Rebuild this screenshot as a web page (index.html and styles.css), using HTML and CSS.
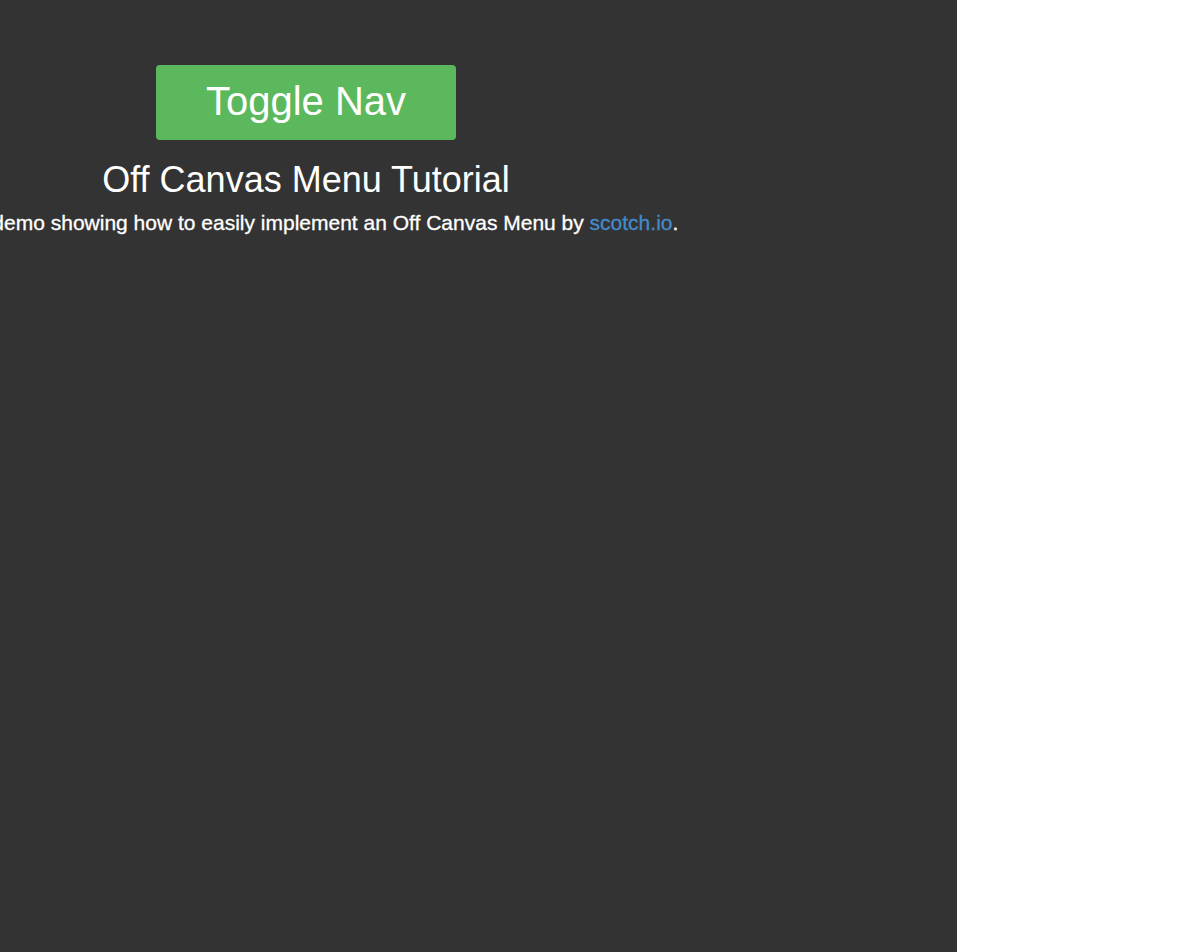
FILE: index.html
```html
<!DOCTYPE html>
<html>
<head>
<meta charset="utf-8">
<link rel="stylesheet" href="styles.css">
</head>
<body>
<div class="site-wrap">
  <div class="content">
    <button class="toggle">Toggle Nav</button>
    <h1 class="title">Off Canvas Menu Tutorial</h1>
    <p class="lead">A demo showing how to easily implement an Off Canvas Menu by <a href="#" class="link">scotch.io</a>.</p>
  </div>
</div>
</body>
</html>
```
FILE: styles.css
```css
html, body {
  margin: 0;
  padding: 0;
  background: #fff;
  font-family: "Liberation Sans", Arial, sans-serif;
}
body {
  display: flex;
  height: 952px;
  overflow: hidden;
}
.site-wrap {
  width: 957px;
  flex: none;
  background: #333333;
  color: #fff;
}
.content {
  width: 612px;
  display: flex;
  flex-direction: column;
  align-items: center;
  padding-top: 65px;
}
.toggle {
  width: 300px;
  height: 75px;
  flex: none;
  background: #5cb85c;
  color: #fff;
  border: none;
  border-radius: 4px;
  font-family: "Liberation Sans", Arial, sans-serif;
  font-size: 40px;
  padding: 0 0 2px;
}
.title {
  margin: 20px 0 8px;
  font-size: 36px;
  font-weight: normal;
  line-height: 1.1;
  white-space: nowrap;
}
.lead {
  margin: 0;
  padding-left: 40px;
  font-size: 21px;
  line-height: 1.4;
  white-space: nowrap;
  -webkit-text-stroke: 0.3px #fff;
}
.link {
  color: #428bca;
  text-decoration: none;
  -webkit-text-stroke: 0.3px #428bca;
}
```
